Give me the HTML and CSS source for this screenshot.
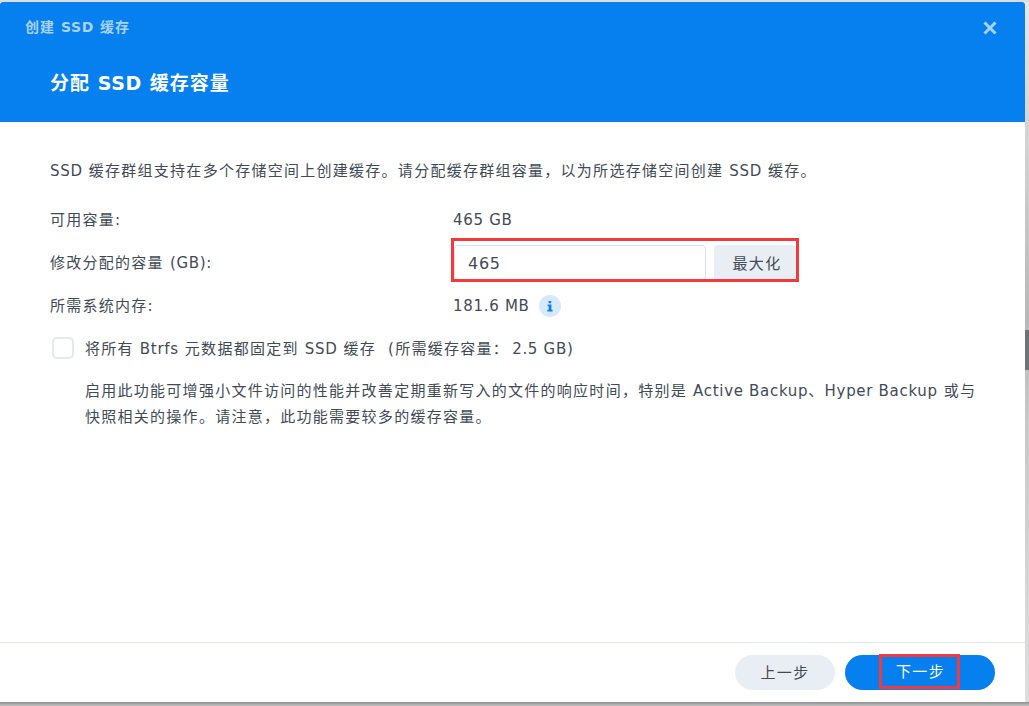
FILE: index.html
```html
<!DOCTYPE html>
<html lang="zh-CN">
<head>
<meta charset="utf-8">
<title>创建 SSD 缓存</title>
<link rel="stylesheet" href="styles.css">
</head>
<body>
<div class="screen">
  <div class="top-strip"></div>
  <div class="middle">
    <main class="dialog">
      <header class="header">
        <div class="header-bar">
          <span class="window-title">创建 <span class="lat">SSD</span> 缓存</span>
          <svg class="close" width="16" height="16" viewBox="0 0 16 16" aria-hidden="true"><path d="M2.500 2.500 13.500 13.500M13.500 2.500 2.500 13.500" stroke="#a9d2f8" stroke-width="3" fill="none"/></svg>
        </div>
        <h1 class="page-title">分配 <span class="lat">SSD</span> 缓存容量</h1>
      </header>
      <section class="content">
        <p class="intro"><span class="lat">SSD</span> 缓存群组支持在多个存储空间上创建缓存。请分配缓存群组容量，以为所选存储空间创建 <span class="lat">SSD</span> 缓存。</p>
        <div class="form-row row-available">
          <span class="label">可用容量:</span>
          <span class="value lat">465 GB</span>
        </div>
        <div class="form-row row-edit">
          <span class="label label-edit">修改分配的容量 <span class="lat">(GB)</span>:</span>
          <div class="field-group">
            <div class="input lat">465</div>
            <div class="max-btn">最大化</div>
          </div>
        </div>
        <div class="form-row row-memory">
          <span class="label">所需系统内存:</span>
          <span class="value lat">181.6 MB</span>
          <span class="info"><svg width="10" height="12" viewBox="0 0 10 12" aria-hidden="true"><path d="M3.600 1h2.600v2.300H3.600zM2.600 4.600h3.800v5.200h1.200v1.600H2.400V9.800h1.300V6.200H2.600z" fill="#0a7fe8"/></svg></span>
        </div>
        <div class="check-row">
          <span class="checkbox"></span>
          <span class="check-label">将所有 <span class="lat">Btrfs</span> 元数据都固定到 <span class="lat">SSD</span> 缓存 &nbsp;(所需缓存容量：<span class="lat size">2.5 GB)</span></span>
        </div>
        <p class="note">启用此功能可增强小文件访问的性能并改善定期重新写入的文件的响应时间，特别是 <span class="lat">Active Backup</span>、<span class="lat">Hyper Backup</span> 或与快照相关的操作。请注意，此功能需要较多的缓存容量。</p>
      </section>
      <footer class="footer">
        <div class="btn btn-prev">上一步</div>
        <div class="btn btn-next"><span class="next-mark">下一步</span></div>
      </footer>
    </main>
    <div class="side-strip"><div class="side-thumb"></div></div>
  </div>
  <div class="bottom-strip"></div>
</div>
</body>
</html>
```
FILE: styles.css
```css
* { box-sizing: border-box; }
html, body { margin: 0; padding: 0; }
body {
  width: 1029px;
  height: 706px;
  overflow: hidden;
  background: #fff;
  font-family: "DejaVu Sans", "Noto Sans CJK SC", sans-serif;
  font-size: 15px;
  line-height: 22px;
  letter-spacing: 1.27px;
  color: #414b55;
}
.lat { letter-spacing: 0.7px; }
.size { margin-left: 3px; }
.screen { display: flex; flex-direction: column; height: 706px; }
.top-strip { height: 2px; background: #dcdcdc; }
.middle { display: flex; height: 700px; }
.bottom-strip { height: 4px; background: linear-gradient(#8e8e8e, #c4c4c4); }
.side-strip { width: 4px; height: 700px; padding-top: 328px; background: linear-gradient(#e8e8e8, #b8b8b8 45%, #c8c8c8 60%, #dedede); }
.side-thumb { height: 40px; background: #6f7376; }
.dialog { width: 1025px; height: 700px; display: flex; flex-direction: column; background: #fff; border-radius: 0 0 4px 4px; }
.header { height: 120px; background: #0580ee; padding: 0 30px 0 25px; border-radius: 3px 3px 0 0; }
.header-bar { height: 50px; display: flex; justify-content: space-between; align-items: center; }
.window-title { font-size: 14px; font-weight: 700; color: #a9d2f8; letter-spacing: 1px; }
.close { margin-right: -3px; margin-top: 1px; }
.page-title { margin: 7px 0 0 25px; font-size: 19px; line-height: 48px; height: 48px; font-weight: 700; color: #fff; letter-spacing: 1px; }
.content { flex: 1; padding: 38px 50px 0; }
.intro { margin: 0; }
.form-row { display: flex; align-items: center; }
.label { width: 403px; flex: none; }
.label-edit { padding-top: 5px; }
.row-available { margin-top: 27px; height: 22px; }
.row-edit { margin-top: 7px; height: 44px; }
.row-memory { margin-top: 12px; height: 24px; }
.field-group { margin-left: -2px; width: 348px; height: 44px; border: 3px solid #f23a3c; padding-top: 4px; display: flex; overflow: hidden; }
.input { width: 252px; height: 36px; flex: none; border: 1px solid #d9e2ec; border-radius: 4px; padding: 0 13px; line-height: 36px; font-size: 16px; }
.max-btn { margin-left: 8px; width: 82px; height: 36px; flex: none; padding-left: 4px; background: #e9eef5; border-radius: 4px; text-align: center; line-height: 38px; }
.info { margin-left: 9px; width: 22px; height: 22px; border-radius: 50%; background: #d6e9fd; display: flex; align-items: center; justify-content: center; }
.check-row { margin-top: 18px; height: 24px; display: flex; align-items: center; }
.checkbox { width: 22px; height: 22px; flex: none; margin-left: 2px; border: 2px solid #e3e9f1; border-radius: 5px; background: #fff; }
.check-label { margin-left: 11px; padding-top: 2px; }
.note { margin: 18px 0 0 35px; line-height: 26px; width: 895px; }
.footer { height: 60px; border-top: 1px solid #dfe6ee; display: flex; justify-content: flex-end; align-items: flex-start; gap: 10px; padding: 12px 30px 0 0; }
.btn { width: 150px; height: 35px; border-radius: 18px; display: flex; align-items: center; justify-content: center; }
.btn-prev { width: 100px; background: #e9eef5; }
.btn-next { background: #0580ee; color: #fff; align-items: flex-start; }
.next-mark { width: 81px; height: 35px; margin: -1px 1px 0 0; padding-left: 2px; border: 3px solid #f23a3c; display: flex; align-items: center; justify-content: center; }
```
